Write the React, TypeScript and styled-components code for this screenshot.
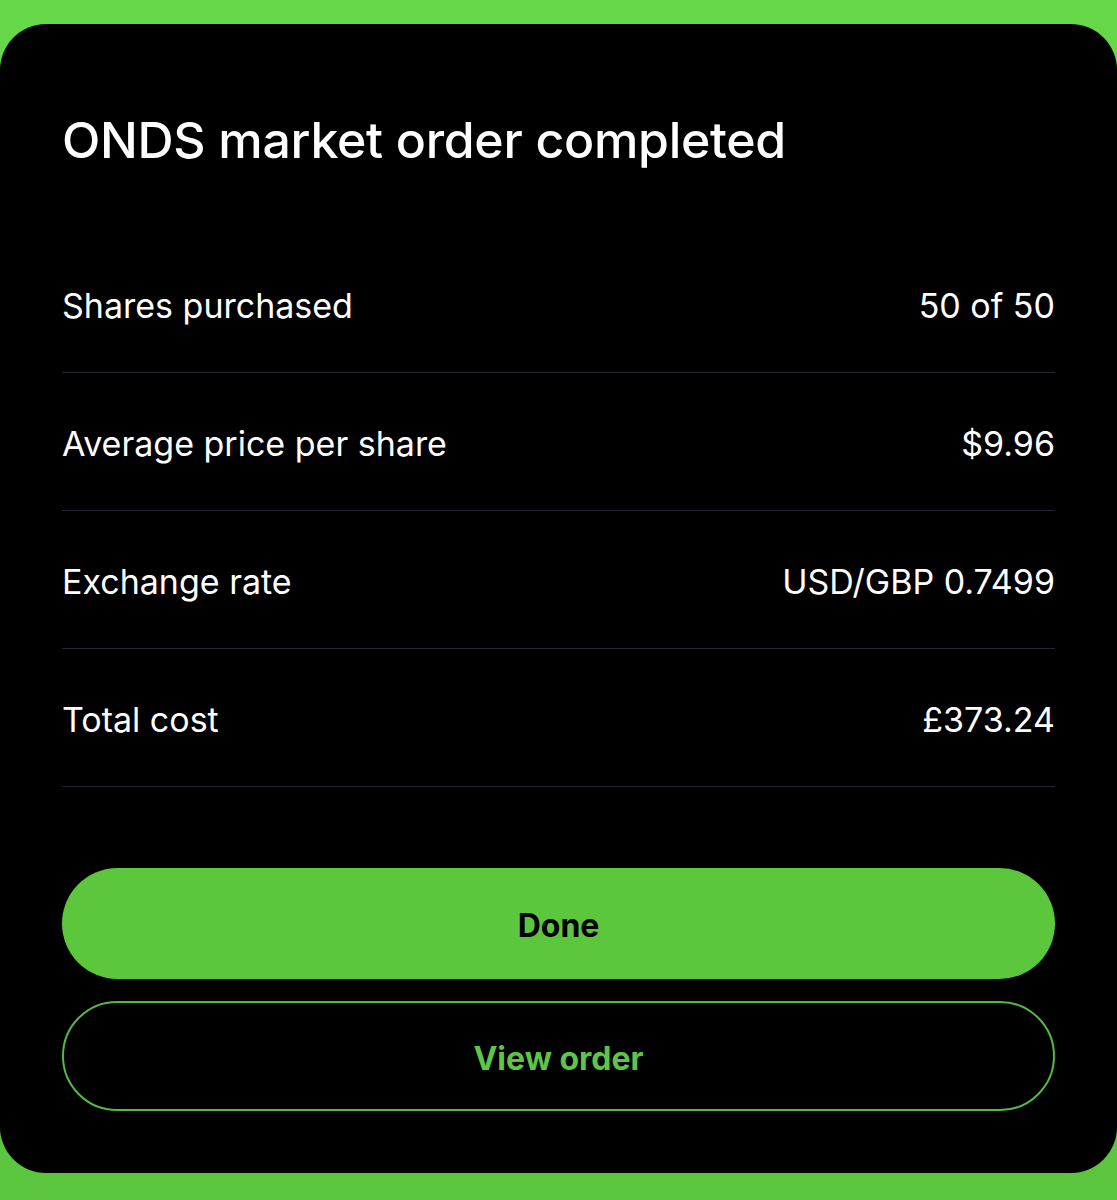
import styled, { createGlobalStyle } from "styled-components";

const GlobalStyle = createGlobalStyle`
body {
    margin: 0;
    background: linear-gradient(180deg, #66d849 0%, #5cc53e 100%);
    font-family: 'Inter', 'Liberation Sans', sans-serif;
}
`;

const Page = styled.div`
height: 1200px;
padding-top: 24px;
box-sizing: border-box;
`;

const Card = styled.div`
height: 1149px;
background: #000000;
border-radius: 46px;
padding: 86px 62px 0;
box-sizing: border-box;
display: flex;
flex-direction: column;
`;

const Title = styled.h1`
margin: 0 0 65px;
font-size: 50px;
line-height: 60px;
font-weight: 500;
color: #FFFFFF;
letter-spacing: -0.3px;
`;

const List = styled.div`
display: flex;
flex-direction: column;
`;

const Row = styled.div`
height: 138px;
box-sizing: border-box;
padding-top: 4px;
border-bottom: 1px solid #262631;
display: flex;
justify-content: space-between;
align-items: center;
`;

const Label = styled.span`
font-size: 34px;
font-weight: 400;
color: #FFFFFF;
`;

const Value = styled.span`
font-size: 34px;
font-weight: 400;
color: #FFFFFF;
`;

const Actions = styled.div`
margin-top: 81px;
display: flex;
flex-direction: column;
gap: 22px;
`;

const Button = styled.button<{ $primary?: boolean }>`
height: ${props => props.$primary ? "111px" : "110px"};
width: 100%;
border-radius: 56px;
border: ${props => props.$primary ? "none" : "2px solid #56b848"};
background: ${props => props.$primary ? "#5cc63d" : "transparent"};
color: ${props => props.$primary ? "#000000" : "#5ec545"};
font-family: 'Inter', 'Liberation Sans', sans-serif;
font-size: 32px;
font-weight: 700;
padding: 4px 0 0;
cursor: pointer;
`;

const rows = [
    { label: "Shares purchased", value: "50 of 50" },
    { label: "Average price per share", value: "$9.96" },
    { label: "Exchange rate", value: "USD/GBP 0.7499" },
    { label: "Total cost", value: "£373.24" },
];

const App = () => {
    return (
        <Page>
            <GlobalStyle />
            <Card>
                <Title>ONDS market order completed</Title>
                <List>
                    {rows.map(r => (
                        <Row key={r.label}>
                            <Label>{r.label}</Label>
                            <Value>{r.value}</Value>
                        </Row>
                    ))}
                </List>
                <Actions>
                    <Button $primary>Done</Button>
                    <Button>View order</Button>
                </Actions>
            </Card>
        </Page>
    )
}

export default App
